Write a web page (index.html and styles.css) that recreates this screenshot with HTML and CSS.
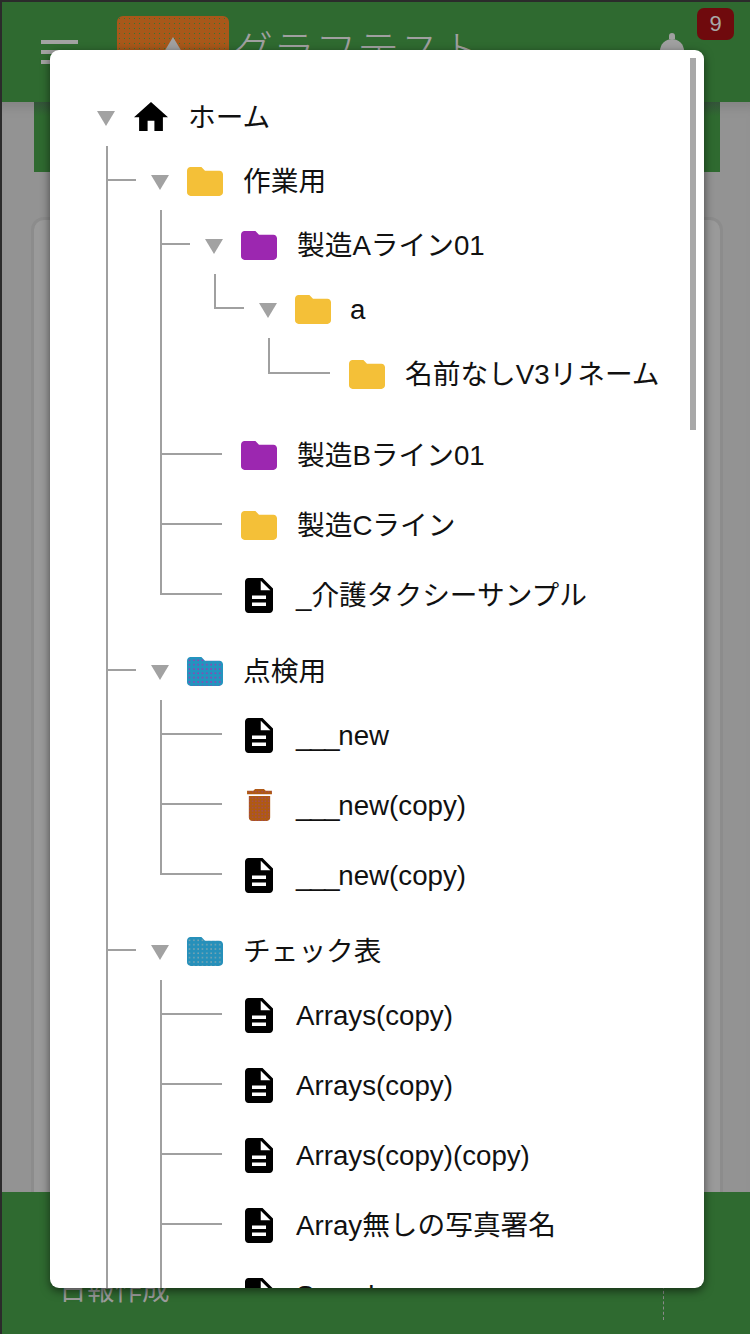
FILE: index.html
```html
<!DOCTYPE html>
<html lang="ja">
<head>
<meta charset="utf-8">
<title>グラフテスト</title>
<link rel="stylesheet" href="styles.css">
</head>
<body>
<svg class="defs" aria-hidden="true">
  <defs>
    <pattern id="dots-magenta" width="4" height="4" patternUnits="userSpaceOnUse" patternTransform="scale(.6)">
      <rect width="4" height="4" fill="#2394bf"/><rect x="1" y="1" width="1.4" height="1.4" fill="#a038b0"/>
    </pattern>
    <pattern id="dots-grey" width="4" height="4" patternUnits="userSpaceOnUse" patternTransform="scale(.6)">
      <rect width="4" height="4" fill="#2690ba"/><rect x="1" y="1" width="1.4" height="1.4" fill="#7fa6b2"/>
    </pattern>
    <pattern id="dots-trash" width="3" height="3" patternUnits="userSpaceOnUse" patternTransform="scale(.6)">
      <rect width="3" height="3" fill="#b05a10"/><rect x="1" y="1" width="1" height="1" fill="#96409a"/>
    </pattern>
    <symbol id="folder" viewBox="2 4 20 16"><path d="M10 4H4c-1.1 0-1.99.9-1.99 2L2 18c0 1.1.9 2 2 2h16c1.1 0 2-.9 2-2V8c0-1.1-.9-2-2-2h-8l-2-2z"/></symbol>
    <symbol id="doc" viewBox="4 2 16 20"><path d="M14 2H6c-1.1 0-1.99.9-1.99 2L4 20c0 1.1.89 2 1.99 2H18c1.1 0 2-.9 2-2V8l-6-6zm2 16H8v-2h8v2zm0-4H8v-2h8v2zm-3-5V3.5L18.5 9H13z"/></symbol>
    <symbol id="home" viewBox="2 3 20 17"><path d="M10 20v-6h4v6h5v-8h3L12 3 2 12h3v8z"/></symbol>
    <symbol id="trash" viewBox="5 3 14 18"><path d="M6 19c0 1.1.9 2 2 2h8c1.1 0 2-.9 2-2V7H6v12zM19 4h-3.5l-1-1h-5l-1 1H5v2h14V4z"/></symbol>
  </defs>
</svg>

<div class="app">
  <header class="topbar">
    <div class="menu"><span class="menu-bar"></span><span class="menu-bar"></span><span class="menu-bar"></span></div>
    <div class="logo"><span class="logo-mark"></span></div>
    <div class="title">グラフテスト</div>
    <div class="bell"><span class="bell-tip"></span><span class="bell-body"></span></div>
    <div class="badge">9</div>
  </header>
  <main class="content">
    <div class="banner"></div>
    <div class="card"></div>
  </main>
  <footer class="bottombar">
    <span class="bottom-label">日報作成</span>
    <span class="bottom-divider"></span>
  </footer>
</div>

<div class="modal">
  <div class="scrollthumb"></div>
  <ul class="tree">
    <li class="node root">
      <div class="row"><span class="toggle"></span><span class="ico ico-home"><svg class="i-home"><use href="#home"/></svg></span><span class="label lat">ホーム</span></div>
      <ul class="sub">
        <li class="node folder more">
          <div class="row short"><span class="toggle"></span><span class="ico"><svg class="i-folder yellow"><use href="#folder"/></svg></span><span class="label">作業用</span></div>
          <ul class="sub">
            <li class="node folder">
              <div class="row short"><span class="toggle"></span><span class="ico"><svg class="i-folder purple"><use href="#folder"/></svg></span><span class="label">製造Aライン01</span></div>
              <ul class="sub">
                <li class="node folder">
                  <div class="row short"><span class="toggle"></span><span class="ico"><svg class="i-folder yellow"><use href="#folder"/></svg></span><span class="label lat">a</span></div>
                  <ul class="sub">
                    <li class="node leaf">
                      <div class="row"><span class="toggle none"></span><span class="ico"><svg class="i-folder yellow"><use href="#folder"/></svg></span><span class="label">名前なしV3リネーム</span></div>
                    </li>
                  </ul>
                </li>
              </ul>
            </li>
            <li class="node leaf gap">
              <div class="row"><span class="toggle none"></span><span class="ico"><svg class="i-folder purple"><use href="#folder"/></svg></span><span class="label">製造Bライン01</span></div>
            </li>
            <li class="node leaf">
              <div class="row"><span class="toggle none"></span><span class="ico"><svg class="i-folder yellow"><use href="#folder"/></svg></span><span class="label">製造Cライン</span></div>
            </li>
            <li class="node leaf">
              <div class="row"><span class="toggle none"></span><span class="ico"><svg class="i-doc"><use href="#doc"/></svg></span><span class="label lat">_介護タクシーサンプル</span></div>
            </li>
          </ul>
        </li>
        <li class="node folder more gap">
          <div class="row short"><span class="toggle"></span><span class="ico"><svg class="i-folder" fill="url(#dots-magenta)"><use href="#folder"/></svg></span><span class="label">点検用</span></div>
          <ul class="sub tight">
            <li class="node leaf">
              <div class="row"><span class="toggle none"></span><span class="ico"><svg class="i-doc"><use href="#doc"/></svg></span><span class="label lat"><span class="under">___</span>new</span></div>
            </li>
            <li class="node leaf">
              <div class="row"><span class="toggle none"></span><span class="ico"><svg class="i-trash" fill="url(#dots-trash)"><use href="#trash"/></svg></span><span class="label lat"><span class="under">___</span>new(copy)</span></div>
            </li>
            <li class="node leaf">
              <div class="row"><span class="toggle none"></span><span class="ico"><svg class="i-doc"><use href="#doc"/></svg></span><span class="label lat"><span class="under">___</span>new(copy)</span></div>
            </li>
          </ul>
        </li>
        <li class="node folder more gap">
          <div class="row short"><span class="toggle"></span><span class="ico"><svg class="i-folder" fill="url(#dots-grey)"><use href="#folder"/></svg></span><span class="label">チェック表</span></div>
          <ul class="sub tight">
            <li class="node leaf">
              <div class="row"><span class="toggle none"></span><span class="ico"><svg class="i-doc"><use href="#doc"/></svg></span><span class="label lat">Arrays(copy)</span></div>
            </li>
            <li class="node leaf">
              <div class="row"><span class="toggle none"></span><span class="ico"><svg class="i-doc"><use href="#doc"/></svg></span><span class="label lat">Arrays(copy)</span></div>
            </li>
            <li class="node leaf">
              <div class="row"><span class="toggle none"></span><span class="ico"><svg class="i-doc"><use href="#doc"/></svg></span><span class="label lat">Arrays(copy)(copy)</span></div>
            </li>
            <li class="node leaf">
              <div class="row"><span class="toggle none"></span><span class="ico"><svg class="i-doc"><use href="#doc"/></svg></span><span class="label lat">Array無しの写真署名</span></div>
            </li>
            <li class="node leaf">
              <div class="row"><span class="toggle none"></span><span class="ico"><svg class="i-doc"><use href="#doc"/></svg></span><span class="label lat">Sample</span></div>
            </li>
          </ul>
        </li>
      </ul>
    </li>
  </ul>
</div>
</body>
</html>
```
FILE: styles.css
```css
* { box-sizing: border-box; }

html, body {
  margin: 0;
  padding: 0;
  width: 750px;
  height: 1334px;
  overflow: hidden;
  background: #939393;
  font-family: "Liberation Sans", "Noto Sans CJK JP", sans-serif;
}

.defs { position: absolute; width: 0; height: 0; }

/* dimmed page behind the dialog */
.app {
  display: flex;
  flex-direction: column;
  width: 750px;
  height: 1334px;
  border-top: 2px solid #2b2b2b;
  border-left: 2px solid #2b2b2b;
}

.topbar {
  position: relative;
  z-index: 1;
  display: flex;
  align-items: flex-start;
  flex: 0 0 100px;
  min-height: 0;
  height: 100px;
  background: #2f6a30;
  padding: 14px 0 0 39px;
}

.menu {
  display: flex;
  flex-direction: column;
  gap: 6px;
  width: 37px;
  margin-top: 24px;
}
.menu-bar { display: block; height: 4px; background: #a3a3a3; }

.logo {
  display: flex;
  justify-content: center;
  flex: 0 0 112px;
  height: 60px;
  margin-left: 39px;
  background-color: #a8581a;
  background-image: radial-gradient(#2f7a34 .7px, transparent .9px);
  background-size: 5px 5px;
  border-radius: 6px;
}
.logo-mark {
  width: 0;
  height: 0;
  margin-top: 21px;
  border-left: 18px solid transparent;
  border-right: 18px solid transparent;
  border-bottom: 30px solid #a0a0a0;
}

.title {
  margin: 4px 0 0 2px;
  font-family: "Noto Sans CJK JP", sans-serif;
  font-weight: 300;
  font-size: 42px;
  line-height: 56px;
  color: #a0a0a0;
  white-space: nowrap;
}

.bell {
  display: flex;
  flex-direction: column;
  align-items: center;
  width: 24px;
  margin: 17px 0 0 177px;
}
.bell-tip { width: 6px; height: 6px; border-radius: 3px 3px 0 0; background: #a0a0a0; }
.bell-body { width: 24px; height: 24px; border-radius: 12px 12px 0 0; background: #a0a0a0; }

.badge {
  position: absolute;
  top: 6px;
  left: 695px;
  width: 37px;
  height: 32px;
  border-radius: 7px;
  background: #6f0a0d;
  color: #a8a8a8;
  font-size: 22px;
  line-height: 32px;
  text-align: center;
}

.content {
  flex: 1 1 auto;
  padding: 0 30px 0 32px;
  display: flex;
  flex-direction: column;
  background: #939393;
  box-shadow: inset 0 12px 8px -6px #858585;
  min-height: 0;
}
.banner {
  flex: 0 0 70px;
  background: linear-gradient(#34533a 0, #2f6a30 14px);
}
.card {
  flex: 1 1 auto;
  margin-top: 48px;
  background: #9a9a9a;
  border-radius: 10px 10px 0 0;
  box-shadow: 0 0 0 3px #8c8c8c;
}

.bottombar {
  position: relative;
  display: flex;
  justify-content: space-between;
  align-items: flex-end;
  flex: 0 0 142px;
  background: #2f6a30;
  padding: 0 86px 14px 57px;
}
.bottom-label {
  font-size: 27.7px;
  line-height: 40px;
  color: #9c9c9c;
  margin-bottom: 9px;
}
.bottom-divider {
  width: 1px;
  height: 50px;
  border-left: 1px dashed #8a8a8a;
}

/* dialog */
.modal {
  position: absolute;
  top: 50px;
  left: 50px;
  width: 654px;
  height: 1238px;
  overflow: hidden;
  padding: 36px 0 0 2px;
  background: #fff;
  border-radius: 9px;
  box-shadow: 0 3px 10px rgba(0, 0, 0, .55);
  z-index: 2;
}
.scrollthumb {
  position: absolute;
  top: 8px;
  left: 640px;
  width: 6px;
  height: 372px;
  background: #a8a8a8;
}

.tree, .sub {
  list-style: none;
  margin: 0;
  padding: 0;
}
.sub { margin-left: 54px; }
.sub.tight { margin-top: -1px; }

.node { position: relative; }
.node.folder { padding-top: 4px; }
.node.gap { padding-top: 11px; }

/* trunk line of the parent list */
.sub > .node::after {
  content: "";
  position: absolute;
  top: 0;
  bottom: 0;
  left: 0;
  width: 2px;
  background: #a0a0a0;
}
.sub.tight > .node:first-child::after { top: 1px; }
.sub > .node.folder:last-child::after { bottom: auto; height: 35px; }
.sub > .node.leaf:last-child::after { bottom: auto; height: 35px; }
.sub > .node.more:last-child::after { bottom: 0; height: auto; }

.row {
  position: relative;
  display: flex;
  align-items: center;
  height: 60px;
  padding-left: 45px;
  font-size: 27.7px;
  color: #111;
}
.leaf > .row { height: 70px; }

/* branch line from the trunk to the row */
.sub > .node > .row::before {
  content: "";
  position: absolute;
  top: calc(50% - 1px);
  left: 0;
  width: 62px;
  height: 2px;
  background: #a0a0a0;
}
.sub > .node > .row.short::before { width: 30px; }

.toggle {
  flex: 0 0 18px;
  width: 18px;
  height: 15px;
  margin-top: 4px;
  border-left: 9px solid transparent;
  border-right: 9px solid transparent;
  border-top: 15px solid #a2a2a2;
}
.toggle.none { border-color: transparent; }

.ico {
  display: flex;
  justify-content: center;
  flex: 0 0 36px;
  margin-left: 18px;
  margin-top: 2px;
}
.ico-home { margin-top: 0; }
.i-folder { width: 36px; height: 29px; }
.i-doc { width: 28px; height: 35px; fill: #000; }
.i-home { width: 34px; height: 29px; fill: #000; }
.i-trash { width: 25px; height: 32px; }
.yellow { fill: #f4c038; }
.purple { fill: #9c27b0; }

.label {
  margin: 4px 0 0 20px;
  line-height: 40px;
  white-space: nowrap;
}
.label.lat { margin-left: 19px; }
.under { letter-spacing: -1.3px; }
```
